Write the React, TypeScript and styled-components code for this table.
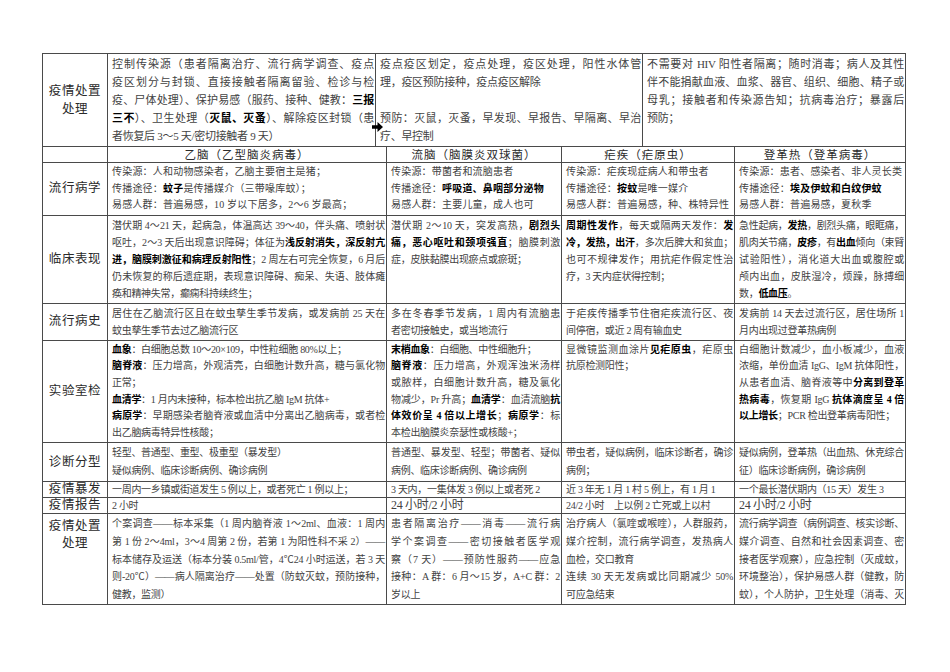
import React from 'react'
import styled, { createGlobalStyle } from 'styled-components'

const GlobalStyle = createGlobalStyle`
  *, *::before, *::after { box-sizing: border-box; }
  html, body { margin: 0; padding: 0; background: #ffffff; }
  body {
    font-family: "Liberation Serif", "Noto Sans CJK SC", serif;
    color: #424242;
  }
`

const LINE = '#4a4a4a'
const TOP = '65px 268px 267px 263px'
const COLS = '65px 279px 175px 173px 171px'

const Sheet = styled.div`
  position: relative;
  width: 864px;
  margin: 53px 0 0 42px;
  border-top: 1px solid ${LINE};
  border-left: 1px solid ${LINE};
`

const Grid = styled.div<{ $cols: string }>`
  display: grid;
  grid-template-columns: ${p => p.$cols};
`

const Cell = styled.div<{ $size?: number; $lh?: number; $pad?: string; $ls?: number }>`
  min-width: 0;
  border-right: 1px solid ${LINE};
  border-bottom: 1px solid ${LINE};
  padding: ${p => p.$pad ?? '1px 1px 1px 4px'};
  font-size: ${p => p.$size ?? 10}px;
  line-height: ${p => p.$lh ?? 17}px;
  letter-spacing: ${p => p.$ls ?? -0.3}px;
`

const Label = styled(Cell)<{ $top?: boolean }>`
  display: flex;
  flex-direction: column;
  align-items: center;
  justify-content: ${p => (p.$top ? 'flex-start' : 'center')};
  padding: ${p => (p.$top ? '4px 0 0' : '0')};
  font-size: 12.5px;
  letter-spacing: 0.6px;
  color: #2a2a2a;
  text-align: center;
`

const Head = styled(Cell)`
  padding: 1px 0 0;
  font-size: 11.5px;
  line-height: 14px;
  letter-spacing: 1px;
  text-align: center;
  color: #2a2a2a;
`

const Line = styled.span<{ $fill?: boolean }>`
  display: block;
  white-space: nowrap;
  text-align: justify;
  text-align-last: ${p => (p.$fill ? 'justify' : 'left')};
`

const B = styled.b`
  font-weight: 700;
  color: #000;
`

const Arrow = styled.svg`
  position: absolute;
  left: 329px;
  top: 68px;
  width: 11px;
  height: 10px;
`

type Block = { lines: string[]; open?: boolean }
const p = (...lines: string[]): Block => ({ lines })
const po = (...lines: string[]): Block => ({ lines, open: true })

const rich = (s: string) =>
  s.split('**').map((part, i) =>
    i % 2 ? <B key={i}>{part}</B> : <React.Fragment key={i}>{part}</React.Fragment>
  )

const Para = ({ lines, open }: Block) => (
  <>
    {lines.map((l, i) => (
      <Line key={i} $fill={open || i < lines.length - 1}>
        {l ? rich(l) : '\u00a0'}
      </Line>
    ))}
  </>
)

type Spec = {
  label: string[]
  cells: Block[][]
  lh?: number
  pad?: string
  ls?: number
  top?: boolean
  sizes?: (number | undefined)[]
}

const rows: Spec[] = [
  {
    label: ['流行病学'],
    ls: 0.2,
    lh: 16.6,
    cells: [
      [p('传染源：人和动物感染者，乙脑主要宿主是猪；'), p('传播途径：**蚊子**是传播媒介（三带喙库蚊）；'), p('易感人群：普遍易感，10 岁以下居多，2～6 岁最高；')],
      [p('传染源：带菌者和流脑患者'), p('传播途径：**呼吸道、鼻咽部分泌物**'), p('易感人群：主要儿童，成人也可')],
      [p('传染源：疟疾现症病人和带虫者'), p('传播途径：**按蚊**是唯一媒介'), p('易感人群：普遍易感，种、株特异性')],
      [p('传染源：患者、感染者、非人灵长类'), p('传播途径：**埃及伊蚊和白纹伊蚊**'), p('易感人群：普遍易感，夏秋季')],
    ],
  },
  {
    label: ['临床表现'],
    cells: [
      [p(
        '潜伏期 4～21 天，起病急，体温高达 39～40，伴头痛、喷射状',
        '呕吐，2～3 天后出现意识障碍；体征为**浅反射消失，深反射亢**',
        '**进，脑膜刺激征和病理反射阳性**；2 周左右可完全恢复，6 月后',
        '仍未恢复的称后遗症期，表现意识障碍、痴呆、失语、肢体瘫',
        '痪和精神失常，癫痫科持续终生；'
      )],
      [p('潜伏期 2～10 天，突发高热，**剧烈头**', '**痛，恶心呕吐和颈项强直**；脑膜刺激', '症，皮肤黏膜出现瘀点或瘀斑；')],
      [p('**周期性发作**，每天或隔两天发作：**发**', '**冷，发热，出汗**，多次后脾大和贫血；', '也可不规律发作；用抗疟作假定性治', '疗，3 天内症状得控制；')],
      [p('急性起病，**发热**，剧烈头痛，眼眶痛，', '肌肉关节痛，**皮疹**，有**出血**倾向（束臂', '试验阳性），消化道大出血或腹腔或', '颅内出血，皮肤湿冷，烦躁，脉搏细', '数，**低血压**。')],
    ],
  },
  {
    label: ['流行病史'],
    cells: [
      [p('居住在乙脑流行区且在蚊虫孳生季节发病，或发病前 25 天在', '蚊虫孳生季节去过乙脑流行区')],
      [p('多在冬春季节发病，1 周内有流脑患', '者密切接触史，或当地流行')],
      [p('于疟疾传播季节住宿疟疾流行区、夜', '间停宿，或近 2 周有输血史')],
      [p('发病前 14 天去过流行区，居住场所 1', '月内出现过登革热病例')],
    ],
  },
  {
    label: ['实验室检'],
    lh: 16.6,
    cells: [
      [
        p('**血象**：白细胞总数 10～20×109，中性粒细胞 80%以上；'),
        p('**脑脊液**：压力增高，外观清亮，白细胞计数升高，糖与氯化物', '正常；'),
        p('**血清学**：1 月内未接种，标本检出抗乙脑 IgM 抗体+'),
        p('**病原学**：早期感染者脑脊液或血清中分离出乙脑病毒，或者检', '出乙脑病毒特异性核酸；'),
      ],
      [
        p('**末梢血象**：白细胞、中性细胞升；'),
        p('**脑脊液**：压力增高，外观浑浊米汤样', '或脓样，白细胞计数升高，糖及氯化', '物减少，Pr 升高；**血清学**：血清流脑**抗**', '**体效价呈 4 倍以上增长**；**病原学**：标', '本检出脑膜炎奈瑟性或核酸+；'),
      ],
      [p('显微镜监测血涂片**见疟原虫**，疟原虫', '抗原检测阳性；')],
      [p('白细胞计数减少，血小板减少，血液', '浓缩，单份血清 IgG、IgM 抗体阳性，', '从患者血清、脑脊液等中**分离到登革**', '**热病毒**，恢复期 IgG **抗体滴度呈 4 倍**', '**以上增长**；PCR 检出登革病毒阳性；')],
    ],
  },
  {
    label: ['诊断分型'],
    lh: 18,
    cells: [
      [p('轻型、普通型、重型、极重型（暴发型）'), p('疑似病例、临床诊断病例、确诊病例')],
      [p('普通型、暴发型、轻型；带菌者、疑似', '病例、临床诊断病例、确诊病例')],
      [p('带虫者，疑似病例，临床诊断者，确诊', '病例；')],
      [p('疑似病例，登革热（出血热、休克综合', '征）临床诊断病例，确诊病例')],
    ],
  },
  {
    label: ['疫情暴发'],
    lh: 15,
    pad: '0 1px 0 4px',
    cells: [
      [p('一周内一乡镇或街道发生 5 例以上，或者死亡 1 例以上；')],
      [p('3 天内，一集体发 3 例以上或者死 2')],
      [p('近 3 年无 1 月 1 村 5 例上，有 1 月 1')],
      [p('一个最长潜伏期内（15 天）发生 3')],
    ],
  },
  {
    label: ['疫情报告'],
    lh: 15,
    pad: '0 1px 0 4px',
    sizes: [10, 12, 10, 12],
    cells: [
      [p('2 小时')],
      [p('24 小时/2 小时')],
      [p('24/2 小时　上以例 2 亡死或上以村')],
      [p('24 小时/2 小时')],
    ],
  },
  {
    label: ['疫情处置', '处理'],
    top: true,
    lh: 17.6,
    cells: [
      [p(
        '个案调查——标本采集（1 周内脑脊液 1～2ml、血液：1 周内',
        '第 1 份 2～4ml，3～4 周第 2 份，若第 1 为阳性科不采 2）——',
        '标本储存及运送（标本分装 0.5ml/管，4℃24 小时运送，若 3 天',
        '则-20℃）——病人隔离治疗——处置（防蚊灭蚊，预防接种，',
        '健教，监测）'
      )],
      [p('患者隔离治疗——消毒——流行病', '学个案调查——密切接触者医学观', '察（7 天）——预防性服药——应急', '接种：A 群：6 月～15 岁，A+C 群：2', '岁以上')],
      [p('治疗病人（氯喹或喉喹），人群服药，', '媒介控制，流行病学调查，发热病人', '血检，交口教育'), p('连续 30 天无发病或比同期减少 50%', '可应急结束')],
      [po('流行病学调查（病例调查、核实诊断、', '媒介调查、自然和社会因素调查、密', '接者医学观察），应急控制（灭成蚊，', '环境整治），保护易感人群（健教，防', '蚊），个人防护，卫生处理（消毒、灭')],
    ],
  },
]

const heads = ['乙脑（乙型脑炎病毒）', '流脑（脑膜炎双球菌）', '疟疾（疟原虫）', '登革热（登革病毒）']

export default function App() {
  return (
    <>
      <GlobalStyle />
      <Sheet>
        <Grid $cols={TOP}>
          <Label $lh={18}>
            <Line>疫情处置</Line>
            <Line>处理</Line>
          </Label>
          <Cell $size={11} $lh={18}>
            <Para
              {...p(
                '控制传染源（患者隔离治疗、流行病学调查、疫点',
                '疫区划分与封锁、直接接触者隔离留验、检诊与检',
                '疫、尸体处理）、保护易感（服药、接种、健教：**三报**',
                '**三不**）、卫生处理（**灭鼠、灭蚤**）、解除疫区封锁（患',
                '者恢复后 3～5 天/密切接触者 9 天）'
              )}
            />
          </Cell>
          <Cell $size={11} $lh={18}>
            <Para {...p('疫点疫区划定，疫点处理，疫区处理，阳性水体管', '理，疫区预防接种，疫点疫区解除')} />
            <Para {...p('')} />
            <Para {...p('预防：灭鼠，灭蚤，早发现、早报告、早隔离、早治', '疗、早控制')} />
          </Cell>
          <Cell $size={11} $lh={18}>
            <Para
              {...p(
                '不需要对 HIV 阳性者隔离；随时消毒；病人及其性',
                '伴不能捐献血液、血浆、器官、组织、细胞、精子或',
                '母乳；接触者和传染源告知；抗病毒治疗；暴露后',
                '预防；'
              )}
            />
          </Cell>
        </Grid>
        <Grid $cols={COLS}>
          <Head />
          {heads.map(h => (
            <Head key={h}>{h}</Head>
          ))}
        </Grid>
        {rows.map((r, i) => (
          <Grid $cols={COLS} key={i}>
            <Label $top={r.top} $lh={r.lh === 15 ? 15 : 17}>
              {r.label.map(t => (
                <Line key={t}>{t}</Line>
              ))}
            </Label>
            {r.cells.map((c, j) => (
              <Cell key={j} $size={r.sizes?.[j]} $lh={r.lh} $pad={r.pad} $ls={r.ls}>
                {c.map((b, k) => (
                  <Para key={k} {...b} />
                ))}
              </Cell>
            ))}
          </Grid>
        ))}
        <Arrow viewBox="0 0 11 10">
          <path d="M0 3.2H5.5V0L11 5L5.5 10V6.8H0Z" fill="#000" />
        </Arrow>
      </Sheet>
    </>
  )
}
